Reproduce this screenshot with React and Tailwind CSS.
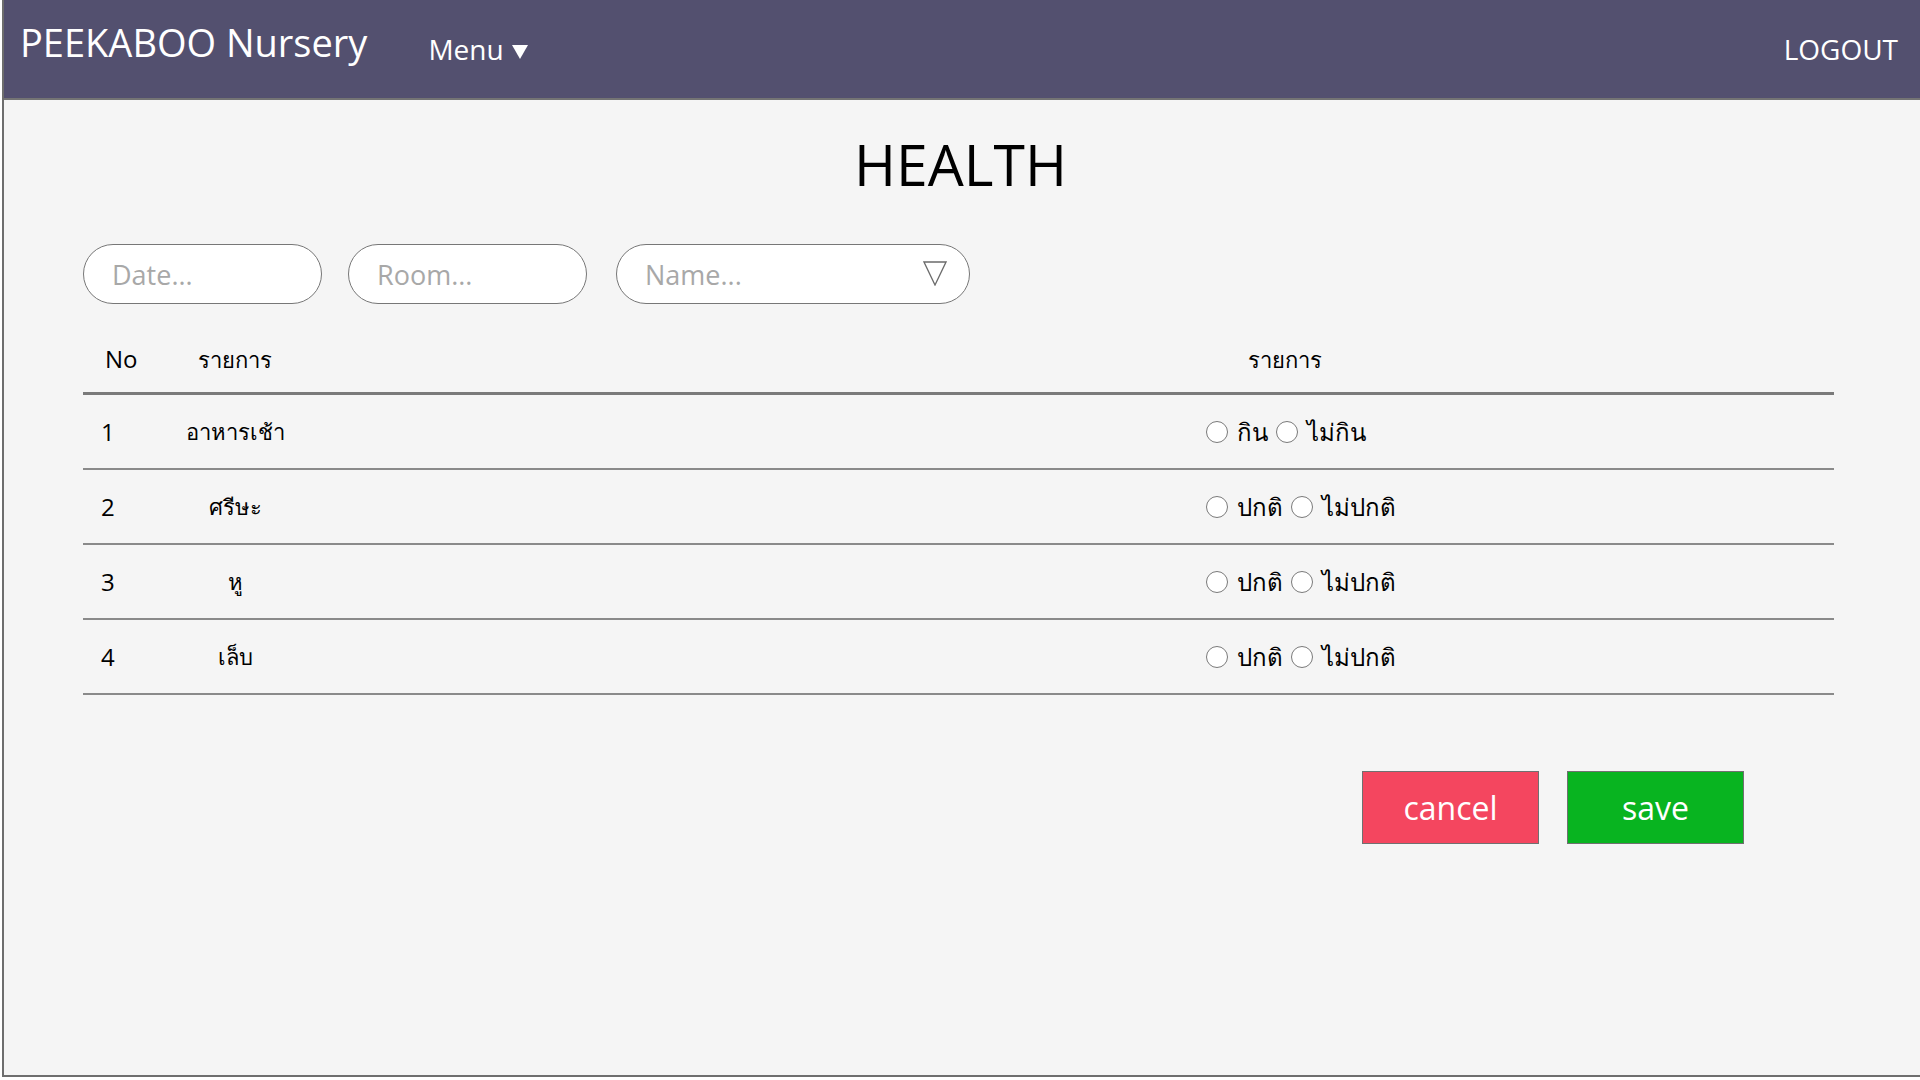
import React from 'react'

const rows = [
  { no: 1, item: 'อาหารเช้า', options: ['กิน', 'ไม่กิน'] },
  { no: 2, item: 'ศรีษะ', options: ['ปกติ', 'ไม่ปกติ'] },
  { no: 3, item: 'หู', options: ['ปกติ', 'ไม่ปกติ'] },
  { no: 4, item: 'เล็บ', options: ['ปกติ', 'ไม่ปกติ'] },
]

function Radio() {
  return <span className="inline-block w-[22px] h-[22px] rounded-full border border-[#7a7a7a] bg-white shrink-0" />
}

function Field({ placeholder, className, children }) {
  return (
    <div className={`h-[60px] rounded-[30px] border border-[#777] bg-white flex items-center pl-[28px] pr-[22px] ${className}`}>
      <span className="text-[27px] text-[#a8a8a8] flex-1 pt-[3px]">{placeholder}</span>
      {children}
    </div>
  )
}

export default function App() {
  return (
    <div className="w-full h-[1080px] bg-white font-['Open_Sans','Noto_Sans','DejaVu_Sans',sans-serif] text-black">
      <div className="ml-[2px] h-[1077px] border-l-2 border-b-2 border-[#6e6e6e] bg-[#f5f5f5] flex flex-col">
        {/* Top bar */}
        <header className="h-[100px] shrink-0 bg-[#53506f] border-b-2 border-[#747474] flex items-center pl-[16px] pr-[22px] text-white">
          <div className="text-[38px] pb-[14px] leading-none">PEEKABOO Nursery</div>
          <button className="ml-[61px] flex items-center gap-[8px] text-[28px] leading-none">
            <span>Menu</span>
            <svg width="16" height="15" viewBox="0 0 16 15" className="mt-[4px]">
              <polygon points="0,1 16,1 8,15" fill="white" />
            </svg>
          </button>
          <div className="ml-auto text-[28px] leading-none">LOGOUT</div>
        </header>

        <main className="pl-[79px] pr-[86px] flex flex-col">
          <h1 className="mt-[36px] text-[57px] leading-none text-center pl-[4px]">HEALTH</h1>

          {/* Filters */}
          <div className="mt-[51px] flex items-center">
            <Field placeholder="Date..." className="w-[239px]" />
            <Field placeholder="Room..." className="w-[239px] ml-[26px]" />
            <Field placeholder="Name..." className="w-[354px] ml-[29px]">
              <svg width="24" height="25" viewBox="0 0 24 25" className="mb-[2px]">
                <polygon points="1,1 23,1 12,24" fill="none" stroke="#6b6b6b" strokeWidth="1.3" />
              </svg>
            </Field>
          </div>

          {/* Table */}
          <div className="mt-[22px]">
            <div className="h-[69px] border-b-[3px] border-[#7a7a7a] grid grid-cols-[70px_164px_889px_1fr] items-center">
              <div className="pl-[22px] text-[24px]">No</div>
              <div className="text-center text-[22px]">รายการ</div>
              <div />
              <div className="pl-[42px] text-[22px]">รายการ</div>
            </div>
            {rows.map((r) => (
              <div key={r.no} className="h-[75px] border-b-2 border-[#8a8a8a] grid grid-cols-[70px_164px_889px_1fr] items-center">
                <div className="pl-[18px] text-[24px]">{r.no}</div>
                <div className="text-center text-[22px]">{r.item}</div>
                <div />
                <div className="flex items-center text-[24px]">
                  <Radio />
                  <span className="ml-[9px]">{r.options[0]}</span>
                  <span className="ml-[8px] flex"><Radio /></span>
                  <span className="ml-[9px]">{r.options[1]}</span>
                </div>
              </div>
            ))}
          </div>

          {/* Actions */}
          <div className="mt-[76px] flex justify-end pr-[90px] gap-[28px]">
            <button className="w-[177px] h-[73px] bg-[#f4465f] border border-[#707070] text-white text-[32px]">cancel</button>
            <button className="w-[177px] h-[73px] bg-[#08b420] border border-[#707070] text-white text-[32px]">save</button>
          </div>
        </main>
      </div>
    </div>
  )
}
